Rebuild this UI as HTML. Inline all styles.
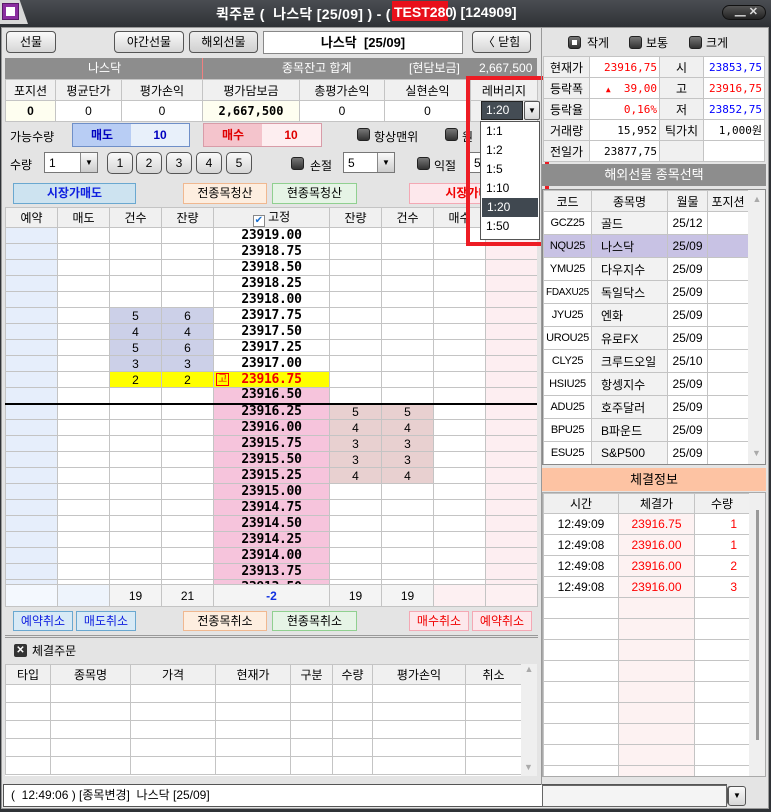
<!DOCTYPE html>
<html><head><meta charset="utf-8">
<style>
*{box-sizing:border-box;margin:0;padding:0}
body{width:771px;height:812px;overflow:hidden;background:#2f3236;font-family:"Liberation Sans","Noto Sans CJK KR",sans-serif;font-size:12px;color:#000;position:relative}
.a{position:absolute}
.btn{position:absolute;background:linear-gradient(#fafafa,#d6d6d6);border:1px solid #555;border-radius:4px;text-align:center;line-height:20px;font-size:12px}
.c{text-align:center}
.r{text-align:right}
table{border-collapse:collapse;table-layout:fixed;position:absolute}
td{border:1px solid #c4c4c4;padding:0 3px;white-space:nowrap;overflow:hidden}
.p{font-family:"DejaVu Sans Mono","Liberation Mono",monospace;font-weight:bold;font-size:13px;text-align:center;letter-spacing:-0.3px}
.rb{position:absolute;width:13px;height:13px;border-radius:3px;background:linear-gradient(#777,#333);border:1px solid #222}
.hd td{background:#f0f0f0;text-align:center}
.cb{position:absolute;border:1px solid #777;background:#fff;height:21px}
.cbb{position:absolute;right:0;top:0;width:17px;height:19px;background:linear-gradient(#fafafa,#ccc);border-left:1px solid #888;font-size:8px;text-align:center;line-height:19px}
</style></head><body>
<div class="a" style="left:0;top:0;width:771px;height:27px;background:linear-gradient(#4a4d52,#2e3135)"></div>
<div class="a" style="left:0;top:0;width:28px;height:24px;background:#d8d8d8;clip-path:polygon(0 0,70% 0,100% 100%,0 100%)"></div>
<div class="a" style="left:2px;top:3px;width:17px;height:17px;background:#8b2ea0;border:1px solid #5a1a6a"></div>
<div class="a" style="left:6px;top:7px;width:9px;height:9px;background:#fff"></div>
<div class="a" style="left:216px;top:4px;color:#fff;font-weight:bold;font-size:14px;letter-spacing:0.3px;white-space:nowrap">퀵주문 (&nbsp; 나스닥 [25/09] ) - (</div>
<div class="a" style="left:392px;top:1px;width:56px;height:20px;background:#e8101a"></div>
<div class="a" style="left:394px;top:4px;color:#fff;font-weight:bold;font-size:14px">TEST280</div>
<div class="a" style="left:452px;top:4px;color:#fff;font-weight:bold;font-size:14px;white-space:nowrap">) [124909]</div>
<div class="a" style="left:722px;top:5px;width:44px;height:15px;border-radius:8px;background:linear-gradient(#555,#222);border:1px solid #111;color:#ddd;font-size:11px;font-weight:bold;text-align:right;padding-right:7px;line-height:13px">▁ ✕</div>
<div class="a" style="left:1px;top:27px;width:768px;height:782px;background:#e4e4e4;border:1px solid #999"></div>

<div class="btn" style="left:6px;top:31px;width:50px;height:22px">선물</div>
<div class="btn" style="left:114px;top:31px;width:70px;height:22px">야간선물</div>
<div class="btn" style="left:189px;top:31px;width:69px;height:22px;background:linear-gradient(#eee,#d0d0d0)">해외선물</div>
<div class="a" style="left:263px;top:31px;width:200px;height:23px;background:#fff;border:1px solid #888;text-align:center;font-weight:bold;font-size:13px;line-height:21px">나스닥 &nbsp;[25/09]</div>
<div class="btn" style="left:472px;top:31px;width:59px;height:22px">〈 닫힘</div>

<div class="a" style="left:5px;top:58px;width:532px;height:21px;background:#8d8d8d;color:#fff;line-height:21px">
<span class="a" style="left:83px">나스닥</span>
<span class="a" style="left:277px">종목잔고 합계</span>
<span class="a" style="left:404px">[현담보금]</span>
<span class="a" style="left:474px">2,667,500</span>
<span class="a" style="left:197px;top:0;width:1px;height:21px;background:#f08080"></span>
</div>
<table style="left:5px;top:79px;width:532px">
<colgroup><col style="width:50px"><col style="width:66px"><col style="width:81px"><col style="width:97px"><col style="width:85px"><col style="width:86px"><col style="width:67px"></colgroup>
<tr class="hd" style="height:21px"><td>포지션</td><td>평균단가</td><td>평가손익</td><td>평가담보금</td><td>총평가손익</td><td>실현손익</td><td>레버리지</td></tr>
<tr style="height:21px;background:#fff"><td class="c" style="background:#fefef0;font-weight:bold">0</td><td class="c">0</td><td class="c">0</td><td class="c" style="background:#fefef0;font-weight:bold;font-family:'DejaVu Sans Mono',monospace">2,667,500</td><td class="c">0</td><td class="c">0</td><td style="background:#f0f0f0"></td></tr>
</table>

<div class="a" style="left:10px;top:128px">가능수량</div>
<div class="a" style="left:72px;top:123px;width:118px;height:24px;border:1px solid #6f8fc8;background:#e8f0fa"></div>
<div class="a" style="left:73px;top:124px;width:58px;height:22px;background:#b8cdf4;color:#0000c0;font-weight:bold;text-align:center;line-height:22px">매도</div>
<div class="a" style="left:131px;top:124px;width:58px;color:#0000c0;font-weight:bold;text-align:center;line-height:22px">10</div>
<div class="a" style="left:203px;top:123px;width:119px;height:24px;border:1px solid #d89ca8;background:#fdeef0"></div>
<div class="a" style="left:204px;top:124px;width:58px;height:22px;background:#f4c4cc;color:#e00000;font-weight:bold;text-align:center;line-height:22px">매수</div>
<div class="a" style="left:262px;top:124px;width:58px;color:#e00000;font-weight:bold;text-align:center;line-height:22px">10</div>
<div class="rb" style="left:357px;top:128px"></div><div class="a" style="left:374px;top:128px">항상맨위</div>
<div class="rb" style="left:445px;top:128px"></div><div class="a" style="left:462px;top:128px">원</div>

<div class="a" style="left:10px;top:156px">수량</div>
<div class="cb" style="left:44px;top:152px;width:54px"><span class="a" style="left:4px;top:3px">1</span><div class="cbb">▼</div></div>
<div class="btn" style="left:107px;top:152px;width:26px;height:22px;border-radius:5px">1</div>
<div class="btn" style="left:136px;top:152px;width:26px;height:22px;border-radius:5px">2</div>
<div class="btn" style="left:166px;top:152px;width:26px;height:22px;border-radius:5px">3</div>
<div class="btn" style="left:196px;top:152px;width:26px;height:22px;border-radius:5px">4</div>
<div class="btn" style="left:226px;top:152px;width:26px;height:22px;border-radius:5px">5</div>
<div class="rb" style="left:291px;top:157px"></div><div class="a" style="left:310px;top:157px">손절</div>
<div class="cb" style="left:343px;top:152px;width:52px"><span class="a" style="left:4px;top:3px">5</span><div class="cbb">▼</div></div>
<div class="rb" style="left:417px;top:157px"></div><div class="a" style="left:434px;top:157px">익절</div>
<div class="cb" style="left:469px;top:152px;width:40px"><span class="a" style="left:4px;top:3px">5</span></div>

<div class="a c" style="left:13px;top:183px;width:123px;height:21px;background:#cde3f0;border:1px solid #6aa8d0;color:#1020e0;font-weight:bold;line-height:19px">시장가매도</div>
<div class="a c" style="left:183px;top:183px;width:84px;height:21px;background:#fdeee0;border:1px solid #f0b890;line-height:19px">전종목청산</div>
<div class="a c" style="left:272px;top:183px;width:85px;height:21px;background:#e6f4e6;border:1px solid #90d090;line-height:19px">현종목청산</div>
<div class="a c" style="left:409px;top:183px;width:128px;height:21px;background:#fde8ec;border:1px solid #f4a8b4;color:#f00000;font-weight:bold;line-height:19px">시장가매수</div>

<table style="left:5px;top:207px;width:532px">
<colgroup><col style="width:52px"><col style="width:52px"><col style="width:52px"><col style="width:52px"><col style="width:116px"><col style="width:52px"><col style="width:52px"><col style="width:52px"><col style="width:52px"></colgroup>
<tr class="hd" style="height:20px"><td>예약</td><td>매도</td><td>건수</td><td>잔량</td><td><span style="display:inline-block;width:12px;height:12px;border:1px solid #888;background:#fff;color:#1a70d0;font-size:10px;line-height:10px;vertical-align:-2px">✔</span> 고정</td><td>잔량</td><td>건수</td><td>매수</td><td>예약</td></tr>
</table>
<div class="a" style="left:5px;top:227px;width:532px;height:357px;overflow:hidden;background:#fff">
<table style="left:0;top:0;width:532px" id="h">
<colgroup><col style="width:52px"><col style="width:52px"><col style="width:52px"><col style="width:52px"><col style="width:116px"><col style="width:52px"><col style="width:52px"><col style="width:52px"><col style="width:52px"></colgroup>
<style>#h tr{height:16px}#h td{line-height:14px}#h td:nth-child(1){background:#e6eefb}#h td:nth-child(9){background:#fdeef1}#h td:nth-child(3){border-left:1px solid #2030e0}#h td:nth-child(5){border-left:1px solid #2030e0}#h td:nth-child(6){border-left:1px solid #e02020}#h td:nth-child(9){border-left:1px solid #e02020}.s{background:#ccd0e8;text-align:center}.b{background:#e8d0d0;text-align:center}.k{background:#f6c4dc}</style>
<tr><td></td><td></td><td></td><td></td><td class="p">23919.00</td><td></td><td></td><td></td><td></td></tr>
<tr><td></td><td></td><td></td><td></td><td class="p">23918.75</td><td></td><td></td><td></td><td></td></tr>
<tr><td></td><td></td><td></td><td></td><td class="p">23918.50</td><td></td><td></td><td></td><td></td></tr>
<tr><td></td><td></td><td></td><td></td><td class="p">23918.25</td><td></td><td></td><td></td><td></td></tr>
<tr><td></td><td></td><td></td><td></td><td class="p">23918.00</td><td></td><td></td><td></td><td></td></tr>
<tr><td></td><td></td><td class="s">5</td><td class="s">6</td><td class="p">23917.75</td><td></td><td></td><td></td><td></td></tr>
<tr><td></td><td></td><td class="s">4</td><td class="s">4</td><td class="p">23917.50</td><td></td><td></td><td></td><td></td></tr>
<tr><td></td><td></td><td class="s">5</td><td class="s">6</td><td class="p">23917.25</td><td></td><td></td><td></td><td></td></tr>
<tr><td></td><td></td><td class="s">3</td><td class="s">3</td><td class="p">23917.00</td><td></td><td></td><td></td><td></td></tr>
<tr><td></td><td></td><td class="c" style="background:#ffff00">2</td><td class="c" style="background:#ffff00">2</td><td class="p" style="background:#ffff00;color:#f00000;position:relative"><span style="position:absolute;left:2px;top:1px;width:13px;height:13px;border:1px solid #f00;font-size:10px;line-height:11px;font-weight:normal">고</span>23916.75</td><td></td><td></td><td></td><td></td></tr>
<tr style="border-bottom:2px solid #000"><td></td><td></td><td></td><td></td><td class="p k">23916.50</td><td></td><td></td><td></td><td></td></tr>
<tr><td></td><td></td><td></td><td></td><td class="p k">23916.25</td><td class="b">5</td><td class="b">5</td><td></td><td></td></tr>
<tr><td></td><td></td><td></td><td></td><td class="p k">23916.00</td><td class="b">4</td><td class="b">4</td><td></td><td></td></tr>
<tr><td></td><td></td><td></td><td></td><td class="p k">23915.75</td><td class="b">3</td><td class="b">3</td><td></td><td></td></tr>
<tr><td></td><td></td><td></td><td></td><td class="p k">23915.50</td><td class="b">3</td><td class="b">3</td><td></td><td></td></tr>
<tr><td></td><td></td><td></td><td></td><td class="p k">23915.25</td><td class="b">4</td><td class="b">4</td><td></td><td></td></tr>
<tr><td></td><td></td><td></td><td></td><td class="p k">23915.00</td><td></td><td></td><td></td><td></td></tr>
<tr><td></td><td></td><td></td><td></td><td class="p k">23914.75</td><td></td><td></td><td></td><td></td></tr>
<tr><td></td><td></td><td></td><td></td><td class="p k">23914.50</td><td></td><td></td><td></td><td></td></tr>
<tr><td></td><td></td><td></td><td></td><td class="p k">23914.25</td><td></td><td></td><td></td><td></td></tr>
<tr><td></td><td></td><td></td><td></td><td class="p k">23914.00</td><td></td><td></td><td></td><td></td></tr>
<tr><td></td><td></td><td></td><td></td><td class="p k">23913.75</td><td></td><td></td><td></td><td></td></tr>
<tr><td></td><td></td><td></td><td></td><td class="p k">23913.50</td><td></td><td></td><td></td><td></td></tr>
</table></div>
<table style="left:5px;top:584px;width:532px;border-top:1px solid #f08080">
<colgroup><col style="width:52px"><col style="width:52px"><col style="width:52px"><col style="width:52px"><col style="width:116px"><col style="width:52px"><col style="width:52px"><col style="width:52px"><col style="width:52px"></colgroup>
<tr style="height:22px" class="c"><td style="background:#f4f8fe"></td><td style="background:#eef4fc"></td><td style="background:#f4f4f4">19</td><td style="background:#f4f4f4">21</td><td style="background:#f4f4f4;color:#1030e0;font-weight:bold">-2</td><td style="background:#f4f4f4">19</td><td style="background:#f4f4f4">19</td><td style="background:#fdf0f2"></td><td style="background:#fdf0f2"></td></tr>
</table>

<div class="a c" style="left:13px;top:611px;width:60px;height:20px;background:#d8eaf6;border:1px solid #6aa8d0;color:#1020e0;line-height:18px">예약취소</div>
<div class="a c" style="left:76px;top:611px;width:60px;height:20px;background:#d8eaf6;border:1px solid #6aa8d0;color:#1020e0;line-height:18px">매도취소</div>
<div class="a c" style="left:183px;top:611px;width:84px;height:20px;background:#fdeee0;border:1px solid #f0b890;line-height:18px">전종목취소</div>
<div class="a c" style="left:272px;top:611px;width:85px;height:20px;background:#e6f4e6;border:1px solid #90d090;line-height:18px">현종목취소</div>
<div class="a c" style="left:409px;top:611px;width:60px;height:20px;background:#fde8ec;border:1px solid #f4a8b4;color:#f00000;line-height:18px">매수취소</div>
<div class="a c" style="left:472px;top:611px;width:60px;height:20px;background:#fde8ec;border:1px solid #f4a8b4;color:#f00000;line-height:18px">예약취소</div>
<div class="a" style="left:5px;top:635px;width:533px;height:3px;border-top:1px solid #999;border-bottom:1px solid #999"></div>

<div class="a" style="left:14px;top:644px;width:13px;height:13px;background:#333;border-radius:2px;color:#fff;font-size:10px;text-align:center;line-height:13px;font-weight:bold">✕</div>
<div class="a" style="left:32px;top:642px">체결주문</div>
<div class="a" style="left:5px;top:664px;width:532px;height:112px;background:#fff;overflow:hidden">
<table style="left:0;top:0;width:516px">
<colgroup><col style="width:45px"><col style="width:80px"><col style="width:85px"><col style="width:75px"><col style="width:42px"><col style="width:40px"><col style="width:93px"><col style="width:56px"></colgroup>
<tr class="hd" style="height:20px"><td>타입</td><td>종목명</td><td>가격</td><td>현재가</td><td>구분</td><td>수량</td><td>평가손익</td><td>취소</td></tr>
<tr style="height:18px"><td></td><td></td><td></td><td></td><td></td><td></td><td></td><td></td></tr>
<tr style="height:18px"><td></td><td></td><td></td><td></td><td></td><td></td><td></td><td></td></tr>
<tr style="height:18px"><td></td><td></td><td></td><td></td><td></td><td></td><td></td><td></td></tr>
<tr style="height:18px"><td></td><td></td><td></td><td></td><td></td><td></td><td></td><td></td></tr>
<tr style="height:18px"><td></td><td></td><td></td><td></td><td></td><td></td><td></td><td></td></tr>
</table>
<div class="a" style="left:516px;top:0;width:16px;height:112px;background:#efefef;color:#aaa;font-size:9px;text-align:center">▲<div class="a" style="left:3px;top:98px">▼</div></div>
</div>

<div class="a" style="left:3px;top:784px;width:724px;height:23px;background:#fff;border:1px solid #555;line-height:21px;padding-left:7px;white-space:nowrap">(&nbsp; 12:49:06 ) [종목변경]&nbsp; 나스닥 [25/09]</div>
<div class="btn" style="left:727px;top:786px;width:17px;height:19px;font-size:8px;line-height:17px;border-radius:3px">▼</div>

<div class="a" style="left:481px;top:101px;width:42px;height:19px;background:#444c54;border:1px solid #222;color:#fff;line-height:17px;padding-left:4px">1:20</div>
<div class="btn" style="left:524px;top:101px;width:16px;height:19px;font-size:8px;line-height:17px;border-radius:2px">▼</div>
<div class="a" style="left:480px;top:121px;width:60px;height:119px;background:#fff;border:1px solid #555;line-height:19px">
<div style="padding-left:5px">1:1</div><div style="padding-left:5px">1:2</div><div style="padding-left:5px">1:5</div><div style="padding-left:5px">1:10</div>
<div style="padding-left:5px;background:#404850;color:#fff;margin:0 1px">1:20</div><div style="padding-left:5px">1:50</div></div>
<div class="a" style="left:466px;top:76px;width:83px;height:170px;border:4px solid #ed1c24"></div>

<div class="a" style="left:541px;top:27px;width:1px;height:758px;background:#999"></div>
<div class="rb" style="left:568px;top:36px"></div><div class="a" style="left:572px;top:40px;width:5px;height:5px;background:#fff"></div>
<div class="a" style="left:587px;top:34px">작게</div>
<div class="rb" style="left:629px;top:36px"></div><div class="a" style="left:646px;top:34px">보통</div>
<div class="rb" style="left:689px;top:36px"></div><div class="a" style="left:706px;top:34px">크게</div>
<table style="left:543px;top:56px;width:221px;background:#fff">
<colgroup><col style="width:46px"><col style="width:70px"><col style="width:44px"><col style="width:61px"></colgroup>
<style>.i td{height:21px;padding:0 2px}.i td:nth-child(odd){background:#f0f0f0;text-align:center}.i td:nth-child(even){text-align:right;font-family:"DejaVu Sans Mono",monospace;font-size:11px}</style>
<tr class="i"><td>현재가</td><td style="color:#f00">23916,75</td><td>시</td><td style="color:#00f">23853,75</td></tr>
<tr class="i"><td>등락폭</td><td style="color:#f00"><span style="font-size:8px">▲</span>&nbsp; 39,00</td><td>고</td><td style="color:#f00">23916,75</td></tr>
<tr class="i"><td>등락율</td><td style="color:#f00">0,16%</td><td>저</td><td style="color:#00f">23852,75</td></tr>
<tr class="i"><td>거래량</td><td>15,952</td><td>틱가치</td><td>1,000원</td></tr>
<tr class="i"><td>전일가</td><td>23877,75</td><td></td><td style="background:#fff"></td></tr>
</table>
<div class="a c" style="left:542px;top:164px;width:224px;height:22px;background:#8d8d8d;color:#fff;line-height:22px;font-size:13px">해외선물 종목선택</div>
<div class="a" style="left:542px;top:189px;width:224px;height:276px;background:#fff;border:1px solid #888;overflow:hidden">
<table style="left:0;top:0;width:205px">
<colgroup><col style="width:48px"><col style="width:76px"><col style="width:40px"><col style="width:41px"></colgroup>
<style>.g td{height:23px;text-align:center}.g td:nth-child(2){text-align:left;padding-left:9px;background:#f2f2f2}.g td:nth-child(1){padding:0;font-size:11px;letter-spacing:-0.3px}.g.sel td{background:#c8c2e4}</style>
<tr class="hd" style="height:21px"><td>코드</td><td>종목명</td><td>월물</td><td>포지션</td></tr>
<tr class="g"><td>GCZ25</td><td>골드</td><td>25/12</td><td></td></tr>
<tr class="g sel"><td>NQU25</td><td>나스닥</td><td>25/09</td><td></td></tr>
<tr class="g"><td>YMU25</td><td>다우지수</td><td>25/09</td><td></td></tr>
<tr class="g"><td style="font-size:10px">FDAXU25</td><td>독일닥스</td><td>25/09</td><td></td></tr>
<tr class="g"><td>JYU25</td><td>엔화</td><td>25/09</td><td></td></tr>
<tr class="g"><td>UROU25</td><td>유로FX</td><td>25/09</td><td></td></tr>
<tr class="g"><td>CLY25</td><td>크루드오일</td><td>25/10</td><td></td></tr>
<tr class="g"><td>HSIU25</td><td>항셍지수</td><td>25/09</td><td></td></tr>
<tr class="g"><td>ADU25</td><td>호주달러</td><td>25/09</td><td></td></tr>
<tr class="g"><td>BPU25</td><td>B파운드</td><td>25/09</td><td></td></tr>
<tr class="g"><td>ESU25</td><td>S&amp;P500</td><td>25/09</td><td></td></tr>
</table>
<div class="a" style="left:205px;top:0;width:18px;height:276px;background:#efefef;color:#aaa;font-size:9px;text-align:center;padding-top:4px">▲<div class="a" style="left:4px;top:258px">▼</div></div>
</div>
<div class="a c" style="left:542px;top:468px;width:224px;height:23px;background:#fdc3a3;line-height:23px;font-size:13px">체결정보</div>
<div class="a" style="left:542px;top:492px;width:224px;height:285px;background:#fff;border:1px solid #aaa;overflow:hidden">
<table style="left:0;top:0;width:206px">
<colgroup><col style="width:75px"><col style="width:76px"><col style="width:55px"></colgroup>
<style>.t td{height:21px}.t td:nth-child(2){background:#fdf2f2;color:#f00;text-align:center}.t td:nth-child(3){color:#f00;text-align:right;padding-right:12px}.t td:nth-child(1){text-align:center}</style>
<tr class="hd" style="height:20px"><td>시간</td><td style="background:#f0f0f0">체결가</td><td>수량</td></tr>
<tr class="t"><td>12:49:09</td><td>23916.75</td><td>1</td></tr>
<tr class="t"><td>12:49:08</td><td>23916.00</td><td>1</td></tr>
<tr class="t"><td>12:49:08</td><td>23916.00</td><td>2</td></tr>
<tr class="t"><td>12:49:08</td><td>23916.00</td><td>3</td></tr>
<tr class="t"><td></td><td></td><td></td></tr><tr class="t"><td></td><td></td><td></td></tr><tr class="t"><td></td><td></td><td></td></tr><tr class="t"><td></td><td></td><td></td></tr><tr class="t"><td></td><td></td><td></td></tr><tr class="t"><td></td><td></td><td></td></tr><tr class="t"><td></td><td></td><td></td></tr><tr class="t"><td></td><td></td><td></td></tr><tr class="t"><td></td><td></td><td></td></tr>
</table>
<div class="a" style="left:206px;top:0;width:18px;height:285px;background:#efefef"><div class="a" style="left:7px;top:17px;width:3px;height:230px;background:#999"></div></div>
</div>
<div class="a" style="left:542px;top:785px;width:185px;height:22px;background:#f4f4f4;border:1px solid #666"></div>
<div class="btn" style="left:728px;top:786px;width:18px;height:20px;font-size:8px;line-height:18px;border-radius:3px">▼</div>
</body></html>
